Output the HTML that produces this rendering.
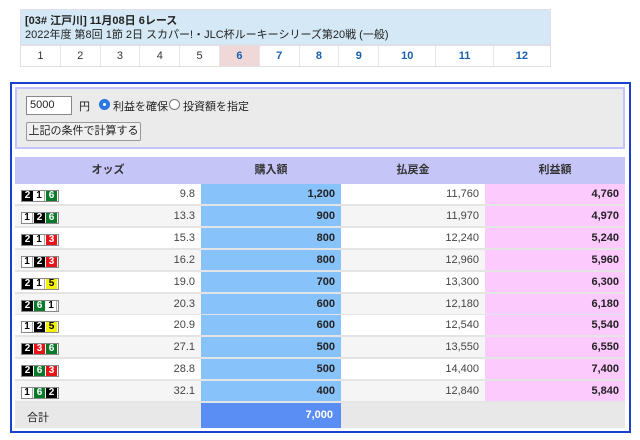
<!DOCTYPE html>
<html><head><meta charset="utf-8"><style>
*{box-sizing:border-box;margin:0;padding:0}
body{width:640px;height:440px;background:#fff;font-family:"Liberation Sans","Noto Sans CJK JP",sans-serif;position:relative;overflow:hidden;color:#222}
.a{position:absolute}
.hd{left:20px;top:9px;width:531px;height:36px;background:#d4e9f5;border:1px solid #dde;padding:4px 4px;font-size:11px;line-height:14px}
.nav{left:20px;top:45px;width:531px;height:22px;border:1px solid #e0e0e0;display:flex;font-size:11px}
.nav div{flex:1;text-align:center;line-height:20px;border-right:1px solid #e6e6e6;color:#333}
.nav div.b{color:#1a5fb0;font-weight:bold}
.outer{left:10px;top:82px;width:621px;height:351px;border:2px solid #1a40d0}
.form{left:15px;top:87px;width:610px;height:62px;background:#ebebeb;border:2px solid #c4c4fa;font-size:11px}
.inp{left:9px;top:7px;width:46px;height:19px;background:#fff;border:1px solid #888;padding:2px 3px;font-size:11px}
.btn{left:9px;top:33px;width:115px;height:19px;border:1px solid #999;background:#f0f0f0;border-radius:2px;text-align:center;line-height:17px;font-size:11px}
.th{top:157px;height:27px;background:#c5c5f8;font-size:11px;font-weight:bold;text-align:center;line-height:27px;color:#333}
.row{left:15px;width:610px;height:22px;border-bottom:2px solid #e4e4e4;font-size:11px}
.c{position:absolute;top:0;height:20px;line-height:21px;text-align:right;padding-right:6px}
.bt{position:absolute;left:6px;top:6px;height:12px;display:flex;border:1px solid #888}
.bt span{width:11px;height:10px;font-size:10px;font-weight:bold;line-height:10px;text-align:center;margin-right:1px}
.k1{background:#fff;color:#000;border-right:1px solid #aaa}.k2{background:#000;color:#fff}.k3{background:#e8141a;color:#fff}.k5{background:#f5f000;color:#000}.k6{background:#0a7a2a;color:#fff}
</style></head><body>
<div class="a hd"><b>[03# 江戸川] 11月08日 6レース</b><br>2022年度 第8回 1節 2日 スカパー!・JLC杯ルーキーシリーズ第20戦 (一般)</div>
<div class="a nav"><div>1</div><div>2</div><div>3</div><div>4</div><div>5</div><div class="b" style="background:#f0d8d8">6</div><div class="b">7</div><div class="b">8</div><div class="b">9</div><div class="b" style="flex:1.45">10</div><div class="b" style="flex:1.45">11</div><div class="b" style="flex:1.45;border-right:0">12</div></div>
<div class="a outer"></div>
<div class="a form">
<div class="a inp">5000</div>
<div class="a" style="left:62px;top:9px">円</div>
<div class="a" style="left:82px;top:10px;width:11px;height:11px;border-radius:50%;background:#2a7be8;border:1px solid #2a6fd8"><div style="margin:3px;width:3px;height:3px;background:#fff;border-radius:50%"></div></div>
<div class="a" style="left:96px;top:9px">利益を確保</div>
<div class="a" style="left:152px;top:10px;width:11px;height:11px;border-radius:50%;background:#fff;border:1px solid #777"></div>
<div class="a" style="left:166px;top:9px">投資額を指定</div>
<div class="a btn">上記の条件で計算する</div>
</div>
<div class="a th" style="left:15px;width:186px">オッズ</div>
<div class="a th" style="left:201px;width:140px">購入額</div>
<div class="a th" style="left:341px;width:144px">払戻金</div>
<div class="a th" style="left:485px;width:140px">利益額</div>
<div id="rows"></div>
<div class="a" style="left:15px;top:403px;width:610px;height:25px;background:#e8e8e8;font-size:11px">
<div class="a" style="left:12px;top:6px">合計</div>
<div class="a" style="left:186px;top:0;width:140px;height:25px;background:#5a8ef5;color:#fff;font-weight:bold;text-align:right;padding-right:8px;line-height:25px">7,000</div>
</div>
<script>
var d=[["216","9.8","1,200","11,760","4,760"],["126","13.3","900","11,970","4,970"],["213","15.3","800","12,240","5,240"],["123","16.2","800","12,960","5,960"],["215","19.0","700","13,300","6,300"],["261","20.3","600","12,180","6,180"],["125","20.9","600","12,540","5,540"],["236","27.1","500","13,550","6,550"],["263","28.8","500","14,400","7,400"],["162","32.1","400","12,840","5,840"]];
var h="";d.forEach(function(r,i){var t=184+i*21.9;var bg=i%2?"#f5f5f5":"#fff";
var b="";for(var j=0;j<3;j++){b+='<span class="k'+r[0][j]+'">'+r[0][j]+'</span>';}
h+='<div class="a row" style="top:'+t+'px;background:'+bg+'"><div class="bt">'+b+'</div>'+
'<div class="c" style="left:0;width:186px;color:#444">'+r[1]+'</div>'+
'<div class="c" style="left:186px;width:140px;background:#88c2fa;font-weight:bold">'+r[2]+'</div>'+
'<div class="c" style="left:326px;width:144px;color:#444">'+r[3]+'</div>'+
'<div class="c" style="left:470px;width:140px;background:#fdcafd;font-weight:bold">'+r[4]+'</div></div>';});
document.getElementById("rows").innerHTML=h;
</script>
</body></html>
